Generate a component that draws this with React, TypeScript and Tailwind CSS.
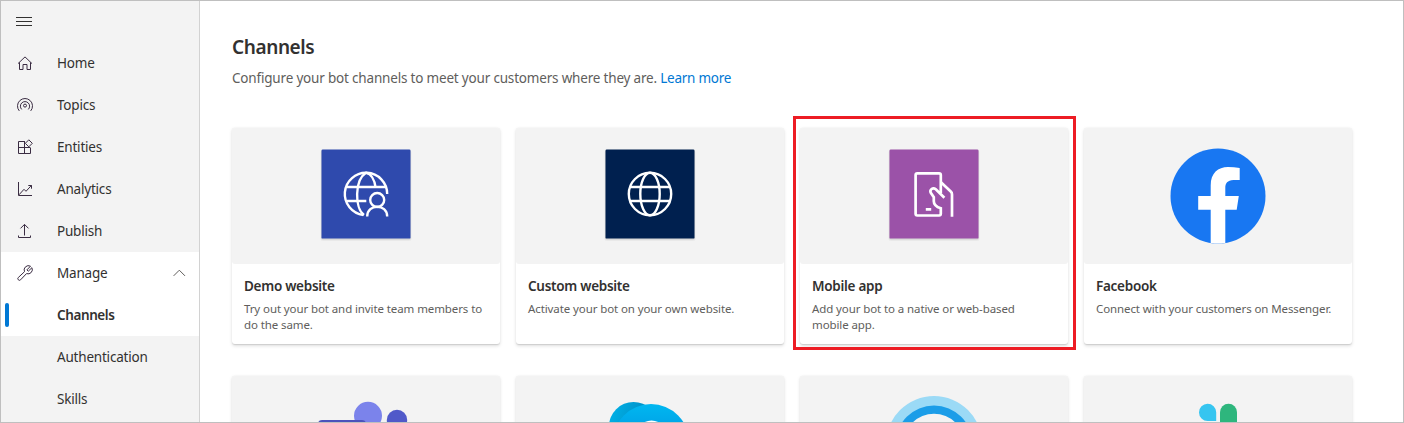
import type { ReactNode } from "react";

function NavIcon({ children }: { children: ReactNode }) {
  return (
    <svg
      className="h-4 w-4 shrink-0"
      viewBox="0 0 16 16"
      fill="none"
      stroke="#3a2c42"
      strokeWidth="1"
    >
      {children}
    </svg>
  );
}

const icons = {
  home: (
    <NavIcon>
      <path d="M1 8.6 8 1.9l7 6.7M2.5 7.4v7.1H6v-5h4v5h3.5V7.4" />
    </NavIcon>
  ),
  topics: (
    <NavIcon>
      <circle cx="8" cy="8.6" r="1.5" />
      <path d="M2.3 13.9a7.5 7.5 0 1 1 11.4 0M4.7 12.4a4.6 4.6 0 1 1 6.6 0" />
    </NavIcon>
  ),
  entities: (
    <NavIcon>
      <path d="M8 2.5H1.5v12h12V9M7.5 2.5v12M1.5 8.5h12" />
      <path d="M11.8.8 15.3 4.3 11.8 7.8 8.3 4.3Z" fill="#f3f3f3" />
    </NavIcon>
  ),
  analytics: (
    <NavIcon>
      <path d="M1.5 1v13.5H15M2 13.8l5-5.5 2 2 5.5-6M11.3 4.5h3.2v3.2" />
    </NavIcon>
  ),
  publish: (
    <NavIcon>
      <path d="M7.5 12.5v-11M3.5 5.4l4-4 4 4M1.5 12.5v2h12v-2" />
    </NavIcon>
  ),
  manage: (
    <NavIcon>
      <path d="M9.9 4.9 13.500 1.200A4.300 4.300 0 0 0 7.500 6.700L1.300 12.500a1.600 1.600 0 0 0 2.300 2.300L9.500 8.600A4.300 4.300 0 0 0 14.900 2.700L11.300 6.200Z" strokeLinejoin="round" />
    </NavIcon>
  ),
};

const nav = [
  { label: "Home", icon: icons.home },
  { label: "Topics", icon: icons.topics },
  { label: "Entities", icon: icons.entities },
  { label: "Analytics", icon: icons.analytics },
  { label: "Publish", icon: icons.publish },
];

function Sidebar() {
  return (
    <nav className="w-[199px] shrink-0 border-r border-[#d2d2d2] bg-[#f3f3f3] text-[13.5px] tracking-[-0.2px] text-[#323130]">
      <div className="mb-px flex h-10 items-center pl-[15px]">
        <svg className="h-4 w-4" viewBox="0 0 16 16" stroke="#323130">
          <path d="M0 4.5h16M0 8.5h16M0 12.5h16" />
        </svg>
      </div>
      {nav.map((n) => (
        <div key={n.label} className="flex h-[42px] items-center gap-6 pl-4">
          {n.icon}
          <span>{n.label}</span>
        </div>
      ))}
      <div className="flex h-[42px] items-center gap-6 bg-white pr-[13px] pl-4">
        {icons.manage}
        <span className="flex-1">Manage</span>
        <svg className="h-3 w-[13px]" viewBox="0 0 13 12" fill="none" stroke="#605e5c">
          <path d="m.6 8.900 5.700-5.700 5.700 5.700" />
        </svg>
      </div>
      <div className="flex h-[42px] items-center bg-white pl-1">
        <span className="h-6 w-1 rounded-full bg-[#0078d4]" />
        <span className="pl-12 font-semibold tracking-[-0.4px]">Channels</span>
      </div>
      <div className="flex h-[42px] items-center pl-14">Authentication</div>
      <div className="flex h-[42px] items-center pl-14">Skills</div>
    </nav>
  );
}

function Art({ children }: { children: ReactNode }) {
  return (
    <svg className="h-24 w-24" viewBox="0 0 96 96" fill="none">
      {children}
    </svg>
  );
}

function Tile({ color, children }: { color: string; children: ReactNode }) {
  return (
    <Art>
      <rect x="2.5" y="2" width="91" height="91" rx="2.5" fill="#000" opacity=".04" />
      <rect x="3" y="1.800" width="90" height="90" rx="2" fill="#000" opacity=".08" />
      <rect x="3.5" y="1.6" width="89" height="89" rx="1.2" fill={color} />
      <g stroke="#fff" strokeWidth="2.4">
        {children}
      </g>
    </Art>
  );
}

const art = {
  demo: (
    <Tile color="#2f4aad">
      <path d="M69.2 46A21.2 21.2 0 1 0 45.3 67" />
      <path d="M29 39h39.5M29 53h19.3M46 67C36.5 60 36.5 32 48 24.800c5 1 8.500 7 9.500 14.200" />
      <circle cx="59.2" cy="52" r="7" />
      <path d="M49.2 68.500c0-13 20-13 20 0" />
    </Tile>
  ),
  custom: (
    <Tile color="#00204f">
      <circle cx="48" cy="46" r="21.2" />
      <ellipse cx="48" cy="46" rx="9.7" ry="21.2" />
      <path d="M28.5 39h39M28.5 53h39" />
    </Tile>
  ),
  mobile: (
    <Tile color="#9b52a8">
      <path
        strokeWidth="2.7"
        d="M54.8 45V27q0-1.700-1.700-1.700H31.300q-1.700 0-1.700 1.700v38.800q0 1.700 1.700 1.700h21.800q1.700 0 1.700-1.700v-5.600c-5-1.500-7-4-7-7v-4l-3-4.400c-1.500-3 2-6 5-3.500l8.600 8.400"
      />
      <path strokeWidth="2.7" d="m55.200 34.500 9.800 9.300q1 1 1 2.700v22.200M39.800 61.300h5.400" />
    </Tile>
  ),
  facebook: (
    <Art>
      <circle cx="48" cy="48" r="47.5" fill="#1877f2" />
      <path
        d="M40.700 95V61.700H28.200V48h12.500V37.500C40.700 25 48 19 58 19q6 0 11.700 1v12h-6.200c-6.200 0-8.200 3.700-8.200 7.700V48h13.500l-2.100 13.700H55.300V95q-7.300 1-14.600 0Z"
        fill="#fff"
      />
    </Art>
  ),
  teams: (
    <Art>
      <circle cx="50" cy="19.8" r="14" fill="#7b83eb" />
      <circle cx="79" cy="24" r="10.200" fill="#5059c9" />
      <rect x="0" y="24" width="48" height="50" rx="4" fill="#4b53bc" />
    </Art>
  ),
  skype: (
    <Art>
      <defs>
        <linearGradient id="sk-back" x1="0" y1="0" x2="1" y2=".3">
          <stop offset="0" stopColor="#00b4ea" />
          <stop offset=".7" stopColor="#0091c8" />
        </linearGradient>
        <linearGradient id="sk-front" x1="0" y1="0" x2="0" y2="1">
          <stop offset="0" stopColor="#00b7f0" />
          <stop offset="1" stopColor="#0078d4" />
        </linearGradient>
      </defs>
      <circle cx="31.5" cy="30.500" r="24.500" fill="url(#sk-back)" />
      <circle cx="49" cy="46" r="38" fill="url(#sk-front)" />
      <ellipse cx="49.5" cy="45" rx="18" ry="20.500" fill="#fff" />
    </Art>
  ),
  bot: (
    <Art>
      <circle cx="48" cy="48" r="48" fill="#9bdaf6" />
      <circle cx="48" cy="48" r="38.5" fill="#1b9de8" />
      <circle cx="48" cy="48" r="30.3" fill="#f3f3f3" />
    </Art>
  ),
  slack: (
    <Art>
      <path d="M46.2 25V16.300a8.600 8.600 0 1 0-8.600 8.700Z" fill="#36c5f0" />
      <rect x="50" y="7.700" width="17" height="36" rx="8.500" fill="#2eb67d" />
    </Art>
  ),
};

type Channel = { title?: string; text?: string; art: ReactNode; selected?: boolean };

const channels: Channel[] = [
  {
    title: "Demo website",
    text: "Try out your bot and invite team members to do the same.",
    art: art.demo,
  },
  { title: "Custom website", text: "Activate your bot on your own website.", art: art.custom },
  {
    title: "Mobile app",
    text: "Add your bot to a native or web-based mobile app.",
    art: art.mobile,
    selected: true,
  },
  { title: "Facebook", text: "Connect with your customers on Messenger.", art: art.facebook },
  { art: art.teams },
  { art: art.skype },
  { art: art.bot },
  { art: art.slack },
];

function Card({ c }: { c: Channel }) {
  return (
    <div className="relative h-[216px] rounded-[3px] bg-white shadow-[0_1.6px_3.6px_rgba(0,0,0,0.13),0_0.3px_0.9px_rgba(0,0,0,0.1)]">
      <div className="flex h-[136px] items-center justify-center rounded-[3px] bg-[#f3f3f3]">{c.art}</div>
      {c.title && (
        <div className="px-3 pt-3">
          <h2 className="text-[13.5px] leading-5 font-semibold tracking-[-0.28px] text-[#323130]">{c.title}</h2>
          <p className="w-[241px] pt-[5px] text-[11.5px] leading-4 tracking-[-0.1px] text-[#605e5c]">{c.text}</p>
        </div>
      )}
      {c.selected && (
        <span className="absolute -top-3 -right-2 -bottom-1.5 -left-[7px] border-3 border-[#ed1c24]" />
      )}
    </div>
  );
}

export default function App() {
  return (
    <div className="flex h-[423px] w-[1404px] overflow-hidden border border-[#bfbfbf] bg-white font-['Noto_Sans','Open_Sans',sans-serif]">
      <Sidebar />
      <main className="flex-1 pt-[34px] pl-8">
        <h1 className="text-[19px] leading-6 font-semibold tracking-[-0.4px] text-[#323130]">Channels</h1>
        <p className="pt-[9px] text-[13.5px] leading-5 tracking-[-0.185px] text-[#605e5c]">
          Configure your bot channels to meet your customers where they are.{" "}
          <a className="tracking-[-0.27px] text-[#0078d4]">Learn more</a>
        </p>
        <div className="grid grid-cols-[repeat(4,268px)] gap-x-4 gap-y-8 pt-10">
          {channels.map((c, i) => (
            <Card key={i} c={c} />
          ))}
        </div>
      </main>
    </div>
  );
}
